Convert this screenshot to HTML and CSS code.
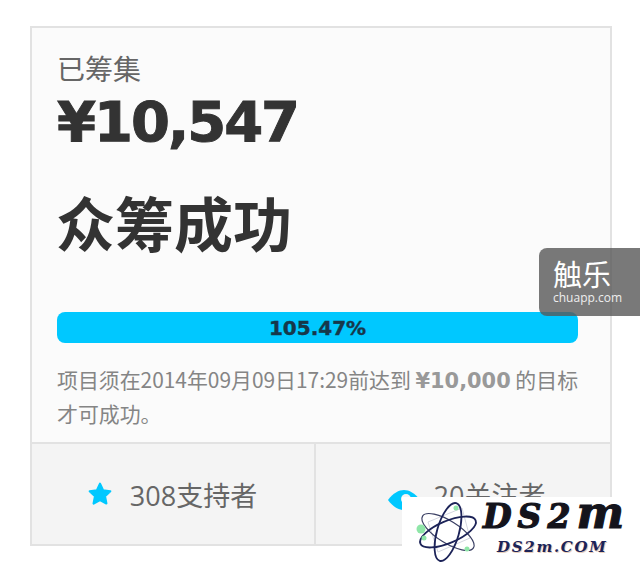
FILE: index.html
```html
<!DOCTYPE html>
<html lang="zh">
<head>
  <meta charset="UTF-8" />
  <title>众筹成功</title>
  <link rel="stylesheet" href="styles.css">
</head>
<body>

  <div class="card">
    <div class="main">
      <div class="label">已筹集</div>
      <div class="amount">¥10,547</div>
      <div class="status">众筹成功</div>
      <div class="bar">105.47%</div>
      <p class="note">项目须在2014年09月09日17:29前达到 <b>¥10,000</b> 的目标才可成功。</p>
    </div>
    <div class="stats">
      <div class="stat stat-star">
        <svg class="icon" width="26" height="26" viewBox="0 0 24 24"><path fill="#00c8ff" stroke="#00c8ff" stroke-width="2" stroke-linejoin="round" d="M12 2.5l2.9 6.2 6.6.8-4.9 4.6 1.3 6.7-5.9-3.3-5.9 3.3 1.3-6.7-4.9-4.6 6.6-.8z"/></svg>
        <span>308支持者</span>
      </div>
      <div class="stat stat-eye">
        <svg class="icon" width="32" height="20" viewBox="0 0 32 20"><path fill="#00c8ff" d="M0 10C5 3 11 0 16 0s11 3 16 10c-5 7-11 10-16 10S5 17 0 10z"/><circle cx="18" cy="9" r="5" fill="#f4f4f4"/></svg>
        <span>20关注者</span>
      </div>
    </div>
  </div>

  <div class="chuapp">
    <div class="chuapp-name">触乐</div>
    <div class="chuapp-url">chuapp.com</div>
  </div>

  <div class="ds2m">
    <svg class="atom" width="70" height="68" viewBox="0 0 70 68">
      <path d="M14 25l34-14 8 30-32 14z" fill="none" stroke="#d4d6e0" stroke-width="1"/>
      <ellipse cx="34" cy="35" rx="11" ry="30" transform="rotate(-58 34 35)" fill="none" stroke="#3a3f63" stroke-width="1.2"/>
      <g fill="none" stroke="#1c2358" stroke-width="1.8">
        <ellipse cx="34" cy="35" rx="11" ry="30" transform="rotate(16 34 35)"/>
        <ellipse cx="34" cy="35" rx="11" ry="30" transform="rotate(67 34 35)"/>
      </g>
      <circle cx="7" cy="32" r="4.5" fill="#8fe6a8"/>
      <circle cx="10" cy="41" r="2.5" fill="#8fe6a8"/>
      <circle cx="42" cy="11" r="2.5" fill="#8fe6a8"/>
      <circle cx="53" cy="52" r="2.5" fill="#8fe6a8"/>
    </svg>
    <div class="ds2m-title">DS2<span class="ds2m-m">m</span></div>
    <div class="ds2m-url">DS2m.COM</div>
  </div>

</body>
</html>
```
FILE: styles.css
```css
body {
  margin: 0;
  background: #fff;
  font-family: 'Open Sans', 'Noto Sans CJK SC', sans-serif;
  overflow: hidden;
}

.card {
  box-sizing: border-box;
  width: 582px;
  height: 520px;
  margin: 26px 0 0 30px;
  display: flex;
  flex-direction: column;
  background: #fbfbfb;
  border: 2px solid #e2e2e2;
}

.main {
  height: 414px;
  box-sizing: border-box;
  padding: 23px 32px 0 25px;
}

.label {
  font-size: 28px;
  line-height: 36px;
  color: #666;
}

.amount {
  margin-top: 2px;
  font-family: 'DejaVu Sans', sans-serif;
  font-weight: bold;
  font-size: 56px;
  letter-spacing: -2px;
  line-height: 66px;
  color: #333;
  -webkit-text-stroke: 1px #333;
}

.status {
  margin: 32px 0 0 -1px;
  font-family: 'Noto Sans CJK SC', sans-serif;
  font-weight: bold;
  font-size: 59px;
  line-height: 70px;
  color: #333;
}

.bar {
  margin-top: 55px;
  height: 31px;
  line-height: 33px;
  border-radius: 8px;
  background: #00c8ff;
  text-align: center;
  font-family: 'DejaVu Sans', sans-serif;
  font-weight: bold;
  font-size: 20px;
  color: #16384a;
  -webkit-text-stroke: 0.4px #16384a;
}

.note {
  margin: 19px -4px 0 0;
  font-family: 'Noto Sans CJK SC', sans-serif;
  font-size: 20.9px;
  line-height: 34px;
  color: #858585;
}

.note b {
  font-family: 'DejaVu Sans', sans-serif;
  line-height: 1;
  color: #999;
}

.stats {
  flex: 1;
  display: flex;
  background: #f4f4f4;
  border-top: 2px solid #e2e2e2;
}

.stat {
  flex: 1;
  display: flex;
  align-items: center;
  justify-content: center;
  font-size: 27px;
  color: #666;
}

.stat-star {
  flex: 0 0 282px;
  box-sizing: border-box;
  gap: 17px;
  padding-right: 2px;
}

.stat-eye {
  gap: 14px;
  padding-left: 7px;
  border-left: 2px solid #e2e2e2;
}

.stat-eye .icon {
  margin-top: 12px;
}

.chuapp {
  position: absolute;
  left: 539px;
  top: 248px;
  width: 101px;
  height: 68px;
  box-sizing: border-box;
  padding: 8px 0 0 14px;
  border-radius: 8px 0 0 8px;
  background: rgba(88, 88, 88, 0.8);
  color: #fff;
}

.chuapp-name {
  font-size: 29px;
  line-height: 34px;
  font-family: 'Noto Sans CJK SC', sans-serif;
}

.chuapp-url {
  font-size: 12px;
  line-height: 16px;
  color: #eee;
}

.ds2m {
  position: absolute;
  left: 402px;
  top: 497px;
  width: 238px;
  height: 68px;
  background: #fff;
}

.atom {
  position: absolute;
  left: 12px;
  top: 0;
}

.ds2m-title {
  position: absolute;
  left: 81px;
  top: -7px;
  font-family: 'DejaVu Serif', serif;
  font-weight: bold;
  font-style: italic;
  font-size: 33px;
  line-height: 46px;
  letter-spacing: 6px;
  color: #14141c;
  -webkit-text-stroke: 1.2px #14141c;
}

.ds2m-m {
  font-size: 45px;
  letter-spacing: 0;
}

.ds2m-url {
  position: absolute;
  left: 95px;
  top: 40px;
  font-family: 'DejaVu Serif', serif;
  font-style: italic;
  font-weight: bold;
  font-size: 15px;
  line-height: 20px;
  letter-spacing: 1.7px;
  color: #1c2358;
  text-shadow: 1px 1px 0 #e8cdb8;
}
```
